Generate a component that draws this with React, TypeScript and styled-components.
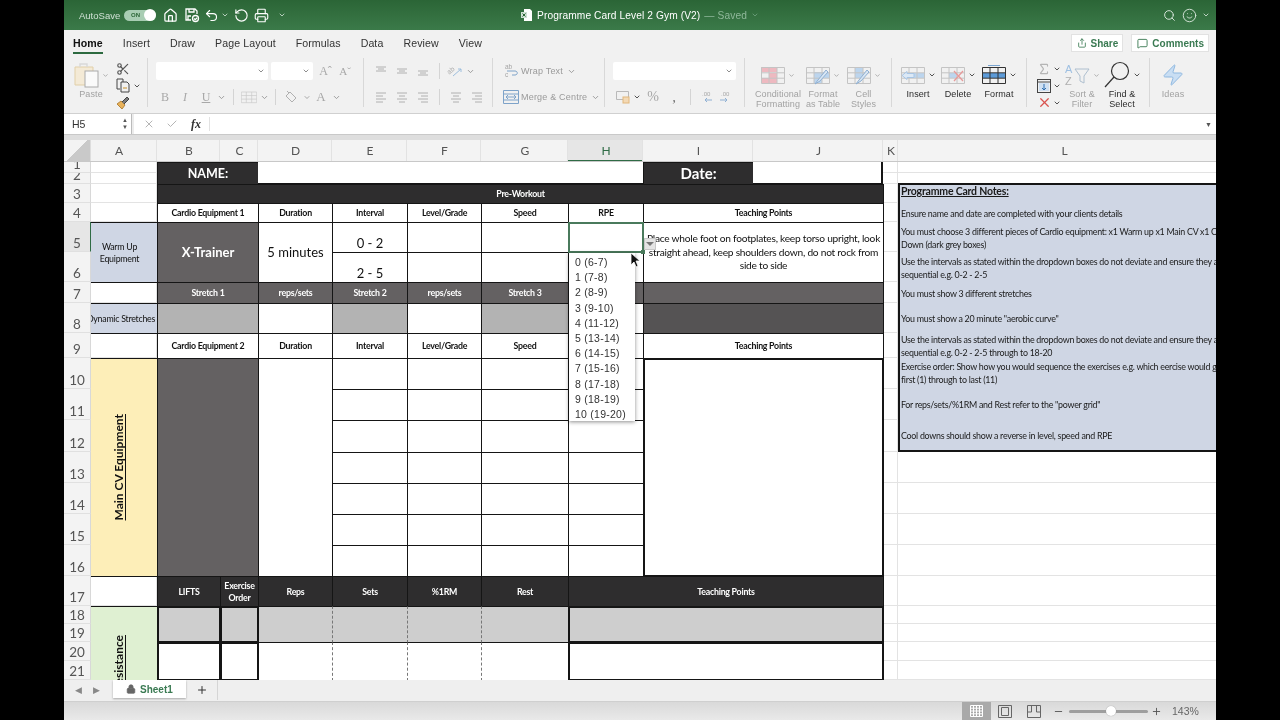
import React from "react";
import styled, { createGlobalStyle } from "styled-components";
import {
  House,
  Undo2,
  RotateCcw,
  Printer,
  Scissors,
  Search,
  Smile,
  ChevronDown,
  MessageSquare,
  Share,
  Lock,
  Plus,
  Minus,
  X,
  Check,
  Zap,
  Sigma,
} from "lucide-react";

const UI_FONT = `"Liberation Sans", Arial, sans-serif`;
const CELL_FONT = `Lato, "Open Sans", sans-serif`;

const COLUMNS = "27px 66px 63px 38px 74px 75px 74px 87px 75px 110px 130px 15px 332px";
const ROW_HEIGHTS = [11, 11, 19, 19, 30, 30, 21, 30, 25, 31, 31, 32, 31, 31, 31, 31, 30, 18, 18, 19, 19];

const GlobalStyle = createGlobalStyle`
  html, body { margin: 0; padding: 0; background: #000; overflow: hidden; }
`;

const Screen = styled.div`
  width: 1280px;
  height: 720px;
  background: #000;
  display: flex;
  justify-content: center;
`;

const Frame = styled.div`
  width: 1152px;
  height: 720px;
  display: flex;
  flex-direction: column;
  overflow: hidden;
  font-family: ${UI_FONT};
  background: #f1f1f1;
  filter: blur(0.35px);
`;

/* title bar */
const TitleBar = styled.header`
  height: 30px;
  flex: none;
  display: grid;
  grid-template-columns: 1fr auto 1fr;
  align-items: center;
  background: linear-gradient(#2b6536, #3b7a49);
  color: #fff;
`;

const Qat = styled.div`
  display: flex;
  align-items: center;
  padding-left: 15px;
`;

const AutoSave = styled.span`
  font-size: 9.5px;
  width: 45px;
  color: #cfe0d4;
`;

const Toggle = styled.span`
  width: 32px;
  height: 11px;
  border-radius: 6px;
  background: #a8cdb3;
  position: relative;
  font-size: 6px;
  line-height: 11px;
  padding-left: 7px;
  box-sizing: border-box;
  color: #2b6536;
  font-weight: bold;
  margin-right: 4px;

  &::after {
    content: "";
    position: absolute;
    right: 0;
    top: -0.5px;
    width: 12px;
    height: 12px;
    background: #fff;
    border-radius: 50%;
  }
`;

const Slot = styled.span<{ $w: number; $h?: number; $c?: string }>`
  width: ${(p) => p.$w}px;
  height: ${(p) => p.$h ?? 18}px;
  flex: none;
  display: flex;
  align-items: center;
  justify-content: center;
  color: ${(p) => p.$c ?? "inherit"};
`;

const DocTitle = styled.div`
  display: flex;
  align-items: center;
  font-size: 10.2px;
  letter-spacing: 0.1px;
  gap: 4px;
`;

const SavedTag = styled.span`
  color: #8fb79a;
`;

const TitleRight = styled.div`
  display: flex;
  align-items: center;
  justify-content: flex-end;
  padding-right: 6px;
  gap: 3px;
  color: #d7e5db;
`;

/* tabs */
const TabRow = styled.nav`
  height: 26px;
  flex: none;
  display: flex;
  align-items: flex-start;
  padding: 4px 7px 0 9px;
  gap: 20px;
  box-sizing: border-box;
  background: #f1f1f1;
`;

const Tab = styled.span<{ $active?: boolean }>`
  font-size: 10.6px;
  line-height: 18px;
  height: 18px;
  letter-spacing: 0.1px;
  color: ${(p) => (p.$active ? "#111" : "#333")};
  font-weight: ${(p) => (p.$active ? "bold" : "normal")};
  border-bottom: ${(p) => (p.$active ? "2px solid #2d6a40" : "none")};
`;

const TabActions = styled.div`
  margin-left: auto;
  display: flex;
  gap: 8px;
`;

const ActionButton = styled.span`
  height: 18px;
  background: #fff;
  border: 1px solid #e2e2e2;
  box-sizing: border-box;
  display: flex;
  align-items: center;
  padding: 0 4px 0 5px;
  gap: 4px;
  font-size: 10px;
  font-weight: bold;
  color: #3a7a52;
`;

/* ribbon */
const Ribbon = styled.section`
  height: 58px;
  flex: none;
  display: flex;
  background: #f1f1f1;
  border-bottom: 1px solid #d0d0d0;
  box-sizing: border-box;
  padding-top: 2px;
`;

const Group = styled.div<{ $w?: number; $pad?: number; $row?: boolean; $lead?: number }>`
  width: ${(p) => (p.$w ? `${p.$w}px` : "auto")};
  flex: ${(p) => (p.$w ? "none" : "1")};
  height: 49px;
  box-sizing: border-box;
  padding: 4px 0 0 ${(p) => p.$pad ?? 0}px;
  border-right: ${(p) => (p.$w ? "1px solid #d8d8d8" : "none")};
  display: flex;
  flex-direction: ${(p) => (p.$row ? "row" : "column")};
  gap: ${(p) => (p.$row ? "0" : "8px")};
`;

const ToolRow = styled.div`
  display: flex;
  align-items: center;
  height: 18px;
`;

const Combo = styled.span<{ $w: number }>`
  width: ${(p) => p.$w}px;
  height: 18px;
  background: #fff;
  border-radius: 2px;
  display: flex;
  align-items: center;
  justify-content: flex-end;
  padding-right: 3px;
  box-sizing: border-box;
  margin-right: 3px;
  color: #666;
`;

const Glyph = styled.span<{ $c?: string; $size?: number; $i?: boolean; $u?: boolean }>`
  font-family: "Liberation Serif", serif;
  font-size: ${(p) => p.$size ?? 11}px;
  font-style: ${(p) => (p.$i ? "italic" : "normal")};
  text-decoration: ${(p) => (p.$u ? "underline" : "none")};
  color: ${(p) => p.$c ?? "#a8a8a8"};
`;

const RowSep = styled.span`
  width: 1px;
  height: 16px;
  background: #d4d4d4;
`;

const InlineLabel = styled.span`
  font-size: 9px;
  color: #9a9a9a;
  letter-spacing: 0.2px;
  white-space: nowrap;
  margin: 0 4px 0 1px;
`;

const BigTool = styled.div<{ $w: number; $dark?: boolean; $lead?: number }>`
  width: ${(p) => p.$w}px;
  flex: none;
  display: flex;
  flex-direction: column;
  align-items: center;
  margin: -2px 0 0 ${(p) => p.$lead ?? 0}px;
  color: ${(p) => (p.$dark ? "#2b2b2b" : "#a2a2a2")};
`;

const BigIcon = styled.div`
  height: 30px;
  flex: none;
  display: flex;
  align-items: center;
  gap: 3px;
  white-space: nowrap;
`;

const BigLabel = styled.span`
  font-size: 9px;
  line-height: 9.5px;
  text-align: center;
  white-space: nowrap;
  letter-spacing: 0.1px;
`;

const ToolStack = styled.div<{ $w: number }>`
  width: ${(p) => p.$w}px;
  flex: none;
  display: flex;
  flex-direction: column;
  align-items: flex-start;
  margin-top: -2px;
`;

const StackRow = styled.div`
  height: 17px;
  display: flex;
  align-items: center;
`;

/* formula bar */
const FormulaBar = styled.div`
  height: 21px;
  flex: none;
  display: flex;
  align-items: center;
  background: #fff;
  border-bottom: 1px solid #c9c9c9;
  box-sizing: border-box;
  color: #b5b5b5;
`;

const NameBox = styled.div`
  width: 68px;
  height: 100%;
  flex: none;
  box-sizing: border-box;
  border-right: 1px solid #bbb;
  display: flex;
  align-items: center;
  justify-content: space-between;
  padding: 0 3px 0 8px;
  font-size: 10.5px;
  color: #333;
`;

const Stepper = styled.span`
  font-size: 6px;
  line-height: 7px;
  color: #555;
  text-align: center;
`;

const FormulaTools = styled.div`
  flex: 1;
  display: flex;
  align-items: center;
  padding-left: 4px;
  height: 100%;
  background: #fff;
  border-left: 2px solid #ececec;
`;

const Fx = styled.span`
  font-family: "Liberation Serif", serif;
  font-style: italic;
  font-weight: bold;
  font-size: 12px;
  color: #333;
`;

const FormulaSep = styled.span`
  width: 1px;
  height: 14px;
  background: #e2e2e2;
  margin-left: 1px;
`;

const FormulaEnd = styled.span`
  margin-left: auto;
  padding-right: 4px;
  font-size: 7px;
  color: #555;
`;

const Strip = styled.div`
  height: 5px;
  flex: none;
  background: #dedede;
`;

/* column headers */
const ColumnRow = styled.div`
  height: 22px;
  flex: none;
  display: grid;
  grid-template-columns: ${COLUMNS};
  background: #f3f3f3;
  border-bottom: 1px solid #c8c8c8;
  box-sizing: border-box;
`;

const Corner = styled.div`
  background: linear-gradient(135deg, #f3f3f3 50%, #c9c9c9 50%);
  border-right: 1px solid #ddd;
`;

const ColumnHead = styled.div<{ $active?: boolean; $first?: boolean }>`
  display: flex;
  align-items: center;
  justify-content: center;
  padding: ${(p) => (p.$first ? "0 9px 0 0" : "0 0 0 2px")};
  font-family: ${CELL_FONT};
  font-size: 12px;
  color: ${(p) => (p.$active ? "#2f6b45" : "#555")};
  background: ${(p) => (p.$active ? "#e6e6e6" : "transparent")};
  border-right: 1px solid #e2e2e2;
  box-shadow: ${(p) => (p.$active ? "inset 0 -1px 0 #2f6b45" : "none")};
`;

/* sheet */
const Sheet = styled.div`
  position: relative;
  height: 518px;
  flex: none;
  display: grid;
  grid-template-columns: ${COLUMNS};
  grid-template-rows: ${ROW_HEIGHTS.map((h) => `${h}px`).join(" ")};
  background: #fff;
  overflow: hidden;
`;

const RowHead = styled.div<{ $r: number; $active?: boolean }>`
  grid-column: 1;
  grid-row: ${(p) => p.$r};
  display: flex;
  align-items: flex-end;
  justify-content: center;
  overflow: hidden;
  font-family: ${CELL_FONT};
  font-size: 13.5px;
  line-height: 16px;
  color: #555;
  background: ${(p) => (p.$active ? "#e6e6e6" : "#f3f3f3")};
  border-bottom: 1px solid #e0e0e0;
  border-right: ${(p) => (p.$active ? "1px solid #2f6b45" : "1px solid #d8d8d8")};
  box-sizing: border-box;
`;

const GridLine = styled.div<{ $r: number; $c: number }>`
  grid-row: ${(p) => p.$r};
  grid-column: ${(p) => p.$c};
  border-right: 1px solid #e3e3e3;
  border-bottom: 1px solid #e3e3e3;
  box-sizing: border-box;
`;

const Cell = styled.div<{
  $c: string;
  $r: string;
  $bg?: string;
  $fg?: string;
  $size?: number;
  $bold?: boolean;
  $noRight?: boolean;
  $heavy?: boolean;
  $low?: boolean;
}>`
  grid-column: ${(p) => p.$c};
  grid-row: ${(p) => p.$r};
  margin: 0 -1px -1px 0;
  box-sizing: border-box;
  display: flex;
  align-items: ${(p) => (p.$low ? "flex-end" : "center")};
  justify-content: center;
  text-align: center;
  overflow: hidden;
  white-space: pre;
  border: ${(p) => (p.$heavy ? 2 : 1)}px solid #151515;
  border-right-style: ${(p) => (p.$noRight ? "none" : "solid")};
  background: ${(p) => p.$bg ?? "#fff"};
  color: ${(p) => p.$fg ?? "#111"};
  font-family: ${CELL_FONT};
  font-size: ${(p) => p.$size ?? 8.8}px;
  letter-spacing: ${(p) => ((p.$size ?? 8.8) > 12 ? "0" : "-0.25px")};
  font-weight: ${(p) => (p.$bold ? 700 : 400)};
  line-height: ${(p) => (p.$low ? "17px" : "1.36")};
`;

const DashedCell = styled(Cell)`
  border-left: 1px dashed #777;
`;

const BlankCell = styled(Cell)<{ $edge?: boolean }>`
  border: none;
  margin: 0;
  background: #fff;
  justify-content: flex-end;
  border-bottom: 1px solid #151515;
  border-right: ${(p) => (p.$edge ? "2px solid #151515" : "none")};
`;

const FrontCell = styled(Cell)`
  padding-right: 9px;
  border-left: none;
`;

const SideLabel = styled(Cell)<{ $start?: number }>`
  justify-content: ${(p) => (p.$start ? "flex-start" : "center")};
  flex-direction: column;
  padding: ${(p) => p.$start ?? 0}px 9px 0 0;
  border-left: none;
`;

const VerticalText = styled.span`
  writing-mode: vertical-rl;
  transform: rotate(180deg);
  white-space: nowrap;
  font-size: 12px;
  letter-spacing: 0;
  font-weight: 700;
  text-decoration: underline;
`;

const ClippedLabel = styled(Cell)`
  justify-content: flex-end;
  white-space: nowrap;
  padding-right: 2px;
  border-left: none;
`;

const SelectedCell = styled(Cell)`
  border: 2px solid #4a7a5c;
  z-index: 3;
`;

const Notes = styled.aside`
  grid-column: 13;
  grid-row: 3 / 13;
  margin-top: -1px;
  background: #cfd6e4;
  border: 2px solid #151515;
  border-right: none;
  box-sizing: border-box;
  padding-left: 1px;
  font-family: ${CELL_FONT};
  color: #1a1a1a;
  white-space: nowrap;
  overflow: hidden;
`;

const NotesTitle = styled.div`
  font-size: 10.5px;
  font-weight: 700;
  letter-spacing: -0.2px;
  text-decoration: underline;
  line-height: 13px;
`;

const NoteLine = styled.div<{ $gap: number }>`
  font-size: 8.9px;
  letter-spacing: -0.27px;
  line-height: 13px;
  margin-top: ${(p) => p.$gap}px;
`;

const Dropdown = styled.ul`
  position: absolute;
  left: 505px;
  top: 91px;
  width: 66px;
  height: 168px;
  margin: 0;
  padding: 2px 0 0;
  box-sizing: border-box;
  list-style: none;
  background: #fff;
  box-shadow: 0 1px 4px rgba(0, 0, 0, 0.45);
  z-index: 5;
`;

const DropdownItem = styled.li`
  height: 15.2px;
  line-height: 15.2px;
  padding-left: 6px;
  font-family: ${UI_FONT};
  font-size: 10.5px;
  letter-spacing: 0.25px;
  color: #333;
  white-space: nowrap;
`;

const ListButton = styled.div`
  position: absolute;
  left: 580px;
  top: 76px;
  width: 12px;
  height: 12px;
  background: #e4e4e4;
  border: 1px solid #c8c8c8;
  box-sizing: border-box;
  display: flex;
  align-items: center;
  justify-content: center;
  z-index: 6;

  &::after {
    content: "";
    border-left: 4px solid transparent;
    border-right: 4px solid transparent;
    border-top: 4px solid #777;
  }
`;

const FillHandle = styled.div`
  position: absolute;
  left: 577px;
  top: 88px;
  width: 4px;
  height: 4px;
  background: #4a7a5c;
  z-index: 6;
`;

const Pointer = styled.svg`
  position: absolute;
  left: 566px;
  top: 90px;
  z-index: 7;
`;

/* bottom bars */
const SheetTabs = styled.div`
  height: 22px;
  flex: none;
  display: flex;
  align-items: flex-start;
  padding-left: 5px;
  background: #efefef;
  border-bottom: 1px solid #cfcfcf;
  box-sizing: border-box;
  color: #888;
  font-size: 9px;
`;

const SheetTab = styled.div`
  width: 73px;
  height: 18px;
  margin-left: 7px;
  background: #fff;
  box-shadow: 0 1px 2px rgba(0, 0, 0, 0.3);
  display: flex;
  align-items: center;
  gap: 4px;
  padding-left: 13px;
  box-sizing: border-box;
  font-size: 10px;
  font-weight: bold;
  color: #3a7a52;
`;

const AddSheet = styled.div`
  width: 31px;
  height: 20px;
  flex: none;
  display: flex;
  align-items: center;
  justify-content: center;
  border-right: 1px solid #d5d5d5;
  color: #333;
`;

const StatusBar = styled.footer`
  flex: 1;
  display: flex;
  align-items: stretch;
  justify-content: flex-end;
  background: linear-gradient(#d9d9d9, #e9e9e9);
  color: #555;
`;

const ViewButton = styled.div<{ $active?: boolean; $w: number }>`
  width: ${(p) => p.$w}px;
  display: flex;
  align-items: center;
  justify-content: center;
  background: ${(p) => (p.$active ? "#a9a9a9" : "transparent")};
  color: ${(p) => (p.$active ? "#fff" : "#666")};
`;

const ZoomTrack = styled.div`
  width: 79px;
  height: 3px;
  align-self: center;
  background: #9e9e9e;
  border-radius: 2px;
  position: relative;
  margin: 0 1px;

  &::after {
    content: "";
    position: absolute;
    left: 37px;
    top: -4px;
    width: 10px;
    height: 10px;
    border-radius: 50%;
    background: #fff;
    box-shadow: 0 0 1px #888;
  }
`;

const ZoomValue = styled.div`
  width: 53px;
  padding-left: 9px;
  box-sizing: border-box;
  font-size: 10.5px;
  align-self: center;
  color: #666;
`;

const Chevron = ({ c = "#999", s = 9 }: { c?: string; s?: number }) => (
  <ChevronDown size={s} color={c} strokeWidth={2.5} />
);

/* drawn icons */
const SaveIcon = () => (
  <svg width="16" height="16" viewBox="0 0 16 16" fill="none" stroke="#fff" strokeWidth="1.3">
    <path d="M7 13H2V2h9l2 2v3" />
    <path d="M5 2v3h5V2M4 13V9h3" />
    <circle cx="11.5" cy="11.5" r="3" />
    <path d="M10 11.5l1.2 1.2 2-2" />
  </svg>
);

const ExcelDoc = () => (
  <svg width="12" height="14" viewBox="0 0 12 14" fill="none">
    <path d="M3 1h6l2 2v10H3z" fill="#fff" />
    <rect x="0" y="4" width="6" height="6" fill="#cfe0d4" />
    <path d="M1.5 5.5l3 3M4.5 5.5l-3 3" stroke="#2b6536" />
  </svg>
);

const PasteIcon = () => (
  <svg width="25" height="26" viewBox="0 0 25 26" fill="none">
    <path d="M1 5h18v18H1z" fill="#f4ead6" stroke="#e1cfa8" />
    <path d="M6 5V2h7v3" stroke="#d9d9d9" strokeWidth="1.4" />
    <rect x="11" y="9" width="13" height="16" fill="#fafafa" stroke="#aaa" />
  </svg>
);

const CopyIcon = () => (
  <svg width="14" height="15" viewBox="0 0 14 15" fill="none" stroke="#444">
    <path d="M1 1h6v3M1 1v10h3" />
    <path d="M5 4h6l2 2v8H5z" />
    <path d="M7 10h4" stroke="#c9912b" />
  </svg>
);

const PainterIcon = () => (
  <svg width="14" height="14" viewBox="0 0 14 14" fill="none">
    <path d="M1 8l5 5 3-4-4-4z" fill="#e9b25a" stroke="#b5863d" />
    <path d="M6 6l5-5 2 2-5 5" fill="#7c7c7c" stroke="#444" />
  </svg>
);

const BucketIcon = () => (
  <svg width="14" height="13" viewBox="0 0 14 13" fill="none" stroke="#b0b0b0">
    <path d="M6 1l6 6-4 4-6-6z" />
    <path d="M5 2L3 0" />
  </svg>
);

const OrientIcon = () => (
  <svg width="16" height="14" viewBox="0 0 16 14" fill="none">
    <text x="1" y="9" fontSize="7" fill="#aaa" fontFamily="Liberation Sans" transform="rotate(-40 4 8)">ab</text>
    <path d="M6 12L14 5M11 5h3v3" stroke="#9dbedd" />
  </svg>
);

type Fill = [number, number, number, number, string];

const TableIcon = ({
  line = "#bbb",
  fills = [],
  small,
  children,
}: {
  line?: string;
  fills?: Fill[];
  small?: boolean;
  children?: React.ReactNode;
}) => (
  <svg width={small ? 16 : 24} height={small ? 14 : 20} viewBox="0 0 24 20" fill="none">
    {fills.map(([x, y, w, h, c], i) => (
      <rect key={i} x={x} y={y} width={w} height={h} fill={c} />
    ))}
    <path d="M.5 2.5h23v16H.5zM.5 7.8h23M.5 13.2h23M8 2.5v16M16 2.5v16" stroke={line} />
    {children}
  </svg>
);

const Brush = () => (
  <path d="M9 19l3-4 8-10 2 2-8 9z" fill="#d9e6f3" stroke="#8fb0d3" />
);

const LinesIcon = ({ rows }: { rows: number[][] }) => (
  <svg width="14" height="14" viewBox="0 0 14 14" stroke="#b0b0b0">
    {rows.map(([y, a, b], i) => (
      <path key={i} d={`M${a} ${y}H${b}`} />
    ))}
  </svg>
);

const WrapIcon = () => (
  <svg width="16" height="16" viewBox="0 0 16 16" fill="none">
    <path d="M4 8H12C15 8 15 12 12 12H9" stroke="#7ea3c9" />
    <text x="2" y="6" fontSize="6.5" fill="#a5a5a5" fontFamily="Liberation Sans">ab</text>
    <text x="2" y="14" fontSize="6.5" fill="#a5a5a5" fontFamily="Liberation Sans">c</text>
  </svg>
);

const MergeIcon = () => (
  <svg width="16" height="14" viewBox="0 0 16 14" fill="none" stroke="#7ea3c9">
    <path d="M.5.5h15v13H.5zM.5 4h15M.5 10h15M3 7h10M5 5L3 7l2 2M11 5l2 2-2 2" />
  </svg>
);

const AccountingIcon = () => (
  <svg width="14" height="14" viewBox="0 0 14 14" fill="none" stroke="#b9b9b9">
    <path d="M.5 1.5h12v8H.5z" />
    <rect x="7" y="7" width="6" height="6" fill="#f3d9b5" stroke="#e2b77c" />
  </svg>
);

const DecimalIcon = ({ flip }: { flip?: boolean }) => (
  <svg width="14" height="12" viewBox="0 0 14 12" fill="none" stroke="#b0b0b0">
    <path d={flip ? "M1 9h7M6 7l2 2-2 2" : "M5 9h7M7 7l-2 2 2 2"} stroke="#8fb0d3" />
    <text x="2" y="5" fontSize="6" stroke="none" fill="#a8a8a8" fontFamily="Liberation Sans">.00</text>
  </svg>
);

const FillDownIcon = () => (
  <svg width="14" height="14" viewBox="0 0 14 14" fill="none">
    <rect x=".5" y=".5" width="13" height="13" stroke="#444" />
    <path d="M.5 3h13" stroke="#444" />
    <rect x="2" y="4" width="10" height="8" fill="#cfe0f2" />
    <path d="M7 5v6M5 9l2 2 2-2" stroke="#2f6fb0" />
  </svg>
);

const SortIcon = () => (
  <svg width="25" height="26" viewBox="0 0 25 26" fill="none">
    <text x="0" y="11" fontSize="11" fill="#9fc0e2" fontFamily="Liberation Sans">A</text>
    <text x="0" y="23" fontSize="11" fill="#b0b0b0" fontFamily="Liberation Sans">Z</text>
    <path d="M10 7h14l-5 7v7l-4-2v-5z" stroke="#aebfcf" />
  </svg>
);

const FindIcon = () => (
  <svg width="26" height="28" viewBox="0 0 26 28" fill="none" stroke="#333" strokeWidth="1.2">
    <circle cx="16" cy="10" r="8.5" />
    <path d="M10 16L1 26" />
  </svg>
);

const PageIcon = () => (
  <svg width="14" height="13" viewBox="0 0 14 13" fill="none" stroke="#666">
    <path d="M.5.5h13v12H.5z" />
    <path d="M3.5 2.5h7v8h-7z" />
  </svg>
);

const BreakIcon = () => (
  <svg width="14" height="13" viewBox="0 0 14 13" fill="none" stroke="#666">
    <path d="M.5.5h13v12H.5zM.5 7h4V.5M9.5.5V7h4" />
  </svg>
);

const NormalIcon = () => (
  <svg width="13" height="12" viewBox="0 0 13 12" stroke="#fff">
    <path d="M.5.5h12v11H.5zM.5 3.2h12M.5 6h12M.5 8.8h12M3.5.5v11M6.5.5v11M9.5.5v11" fill="none" />
  </svg>
);

const columnLetters = ["A", "B", "C", "D", "E", "F", "G", "H", "I", "J", "K", "L"];
const heads = ["Duration", "Interval", "Level/Grade", "Speed", "RPE"];
const headCols = ["5", "6", "7", "8", "9"];
const rpeOptions = [
  "0 (6-7)", "1 (7-8)", "2 (8-9)", "3 (9-10)", "4 (11-12)", "5 (13-14)",
  "6 (14-15)", "7 (15-16)", "8 (17-18)", "9 (18-19)", "10 (19-20)",
];
const DARK = "#2e2d2e";
const MID = "#646162";
const SILVER = "#b3b3b3";
const PALE = "#cecece";

const Titlebar = () => (
  <TitleBar>
    <Qat>
      <AutoSave>AutoSave</AutoSave>
      <Toggle>ON</Toggle>
      <Slot $w={21}><House size={15} strokeWidth={2} /></Slot>
      <Slot $w={21}><SaveIcon /></Slot>
      <Slot $w={18}><Undo2 size={15} strokeWidth={1.8} /></Slot>
      <Slot $w={10}><Chevron c="#cfe0d4" s={8} /></Slot>
      <Slot $w={23}><RotateCcw size={15} strokeWidth={1.8} /></Slot>
      <Slot $w={17}><Printer size={15} strokeWidth={1.8} /></Slot>
      <Slot $w={23}><Chevron c="#cfe0d4" s={8} /></Slot>
    </Qat>
    <DocTitle>
      <ExcelDoc />
      Programme Card Level 2 Gym (V2)
      <SavedTag>— Saved</SavedTag>
      <Chevron c="#6fa07e" s={8} />
    </DocTitle>
    <TitleRight>
      <Search size={13} strokeWidth={1.8} />
      <Slot $w={20}><Smile size={15} strokeWidth={1.5} /></Slot>
      <Chevron c="#d7e5db" s={8} />
    </TitleRight>
  </TitleBar>
);

const Tabs = () => (
  <TabRow>
    <Tab $active>Home</Tab>
    {["Insert", "Draw", "Page Layout", "Formulas", "Data", "Review", "View"].map((t) => (
      <Tab key={t}>{t}</Tab>
    ))}
    <TabActions>
      <ActionButton><Share size={10} />Share</ActionButton>
      <ActionButton><MessageSquare size={11} />Comments</ActionButton>
    </TabActions>
  </TabRow>
);

const alignTop = [[[3, 2, 12], [5, 4, 10], [7, 2, 12]], [[5, 2, 12], [7, 4, 10], [9, 2, 12]], [[7, 2, 12], [9, 4, 10], [11, 2, 12]]];
const alignBottom = [[[3, 2, 12], [6, 2, 9], [9, 2, 12], [12, 2, 9]], [[3, 2, 12], [6, 4, 10], [9, 2, 12], [12, 4, 10]], [[3, 2, 12], [6, 5, 12], [9, 2, 12], [12, 5, 12]]];

const RibbonBar = () => (
  <Ribbon>
    <Group $w={84} $row>
      <BigTool $w={44} $lead={5}>
        <BigIcon><PasteIcon /><Chevron s={7} /></BigIcon>
        <BigLabel>Paste</BigLabel>
      </BigTool>
      <ToolStack $w={30}>
        <StackRow><Slot $w={20} $h={17}><Scissors size={14} color="#555" /></Slot></StackRow>
        <StackRow><Slot $w={20} $h={17}><CopyIcon /></Slot><Chevron c="#333" s={8} /></StackRow>
        <StackRow><Slot $w={20} $h={17}><PainterIcon /></Slot></StackRow>
      </ToolStack>
    </Group>

    <Group $w={216} $pad={8}>
      <ToolRow>
        <Combo $w={112}><Chevron c="#777" s={8} /></Combo>
        <Combo $w={42}><Chevron c="#777" s={8} /></Combo>
        <Slot $w={19}><Glyph $size={12}>Aˆ</Glyph></Slot>
        <Slot $w={20}><Glyph $size={11}>Aˇ</Glyph></Slot>
      </ToolRow>
      <ToolRow>
        <Slot $w={18}><Glyph $size={12}>B</Glyph></Slot>
        <Slot $w={22}><Glyph $size={12} $i>I</Glyph></Slot>
        <Slot $w={20}><Glyph $size={12} $u>U</Glyph></Slot>
        <Slot $w={10}><Chevron /></Slot>
        <Slot $w={14}><RowSep /></Slot>
        <Slot $w={17}><TableIcon line="#c9c9c9" small /></Slot>
        <Slot $w={14}><Chevron /></Slot>
        <Slot $w={8}><RowSep /></Slot>
        <Slot $w={24}><BucketIcon /></Slot>
        <Slot $w={8}><Chevron /></Slot>
        <Slot $w={20}><Glyph $size={13}>A</Glyph></Slot>
        <Slot $w={10}><Chevron /></Slot>
      </ToolRow>
    </Group>

    <Group $w={129} $pad={7}>
      <ToolRow>
        <Slot $w={20}><LinesIcon rows={alignTop[0]} /></Slot>
        <Slot $w={21}><LinesIcon rows={alignTop[1]} /></Slot>
        <Slot $w={21}><LinesIcon rows={alignTop[2]} /></Slot>
        <Slot $w={13}><RowSep /></Slot>
        <Slot $w={18}><OrientIcon /></Slot>
        <Slot $w={12}><Chevron /></Slot>
      </ToolRow>
      <ToolRow>
        <Slot $w={20}><LinesIcon rows={alignBottom[0]} /></Slot>
        <Slot $w={21}><LinesIcon rows={alignBottom[1]} /></Slot>
        <Slot $w={21}><LinesIcon rows={alignBottom[2]} /></Slot>
        <Slot $w={13}><RowSep /></Slot>
        <Slot $w={20}><LinesIcon rows={alignBottom[1]} /></Slot>
        <Slot $w={21}><LinesIcon rows={alignBottom[2]} /></Slot>
      </ToolRow>
    </Group>

    <Group $w={112} $pad={8}>
      <ToolRow>
        <Slot $w={19}><WrapIcon /></Slot>
        <InlineLabel>Wrap Text</InlineLabel>
        <Chevron />
      </ToolRow>
      <ToolRow>
        <Slot $w={19}><MergeIcon /></Slot>
        <InlineLabel>Merge &amp; Centre</InlineLabel>
        <Chevron />
      </ToolRow>
    </Group>

    <Group $w={140} $pad={8}>
      <ToolRow>
        <Combo $w={123}><Chevron c="#777" s={8} /></Combo>
      </ToolRow>
      <ToolRow>
        <Slot $w={20}><AccountingIcon /></Slot>
        <Slot $w={8}><Chevron c="#333" s={8} /></Slot>
        <Slot $w={24}><Glyph $size={14}>%</Glyph></Slot>
        <Slot $w={18}><Glyph $size={15} $c="#777">,</Glyph></Slot>
        <Slot $w={14}><RowSep /></Slot>
        <Slot $w={19}><DecimalIcon /></Slot>
        <Slot $w={20}><DecimalIcon flip /></Slot>
      </ToolRow>
    </Group>

    <Group $w={147} $pad={4} $row>
      <BigTool $w={58}>
        <BigIcon>
          <TableIcon line="#c4c4c4" fills={[[0, 2, 8, 5, "#eeb9c0"], [8, 2, 8, 5, "#eeb9c0"], [8, 8, 8, 5, "#eeb9c0"], [0, 13, 16, 5, "#eeb9c0"]]} />
          <Chevron s={7} />
        </BigIcon>
        <BigLabel>Conditional<br />Formatting</BigLabel>
      </BigTool>
      <BigTool $w={32}>
        <BigIcon>
          <TableIcon line="#c4c4c4" fills={[[8, 7, 16, 6, "#bcd5ee"], [8, 13, 8, 5, "#bcd5ee"]]}><Brush /></TableIcon>
          <Chevron s={7} />
        </BigIcon>
        <BigLabel>Format<br />as Table</BigLabel>
      </BigTool>
      <BigTool $w={49}>
        <BigIcon>
          <TableIcon line="#c4c4c4" fills={[[8, 2, 8, 11, "#bcd5ee"]]}><Brush /></TableIcon>
          <Chevron s={7} />
        </BigIcon>
        <BigLabel>Cell<br />Styles</BigLabel>
      </BigTool>
    </Group>

    <Group $w={135} $pad={6} $row>
      <BigTool $w={40} $dark>
        <BigIcon>
          <TableIcon line="#c4c4c4" fills={[[8, 8, 16, 5, "#bcd5ee"]]}>
            <path d="M1 10.5l5-4v2h7v4H6v2z" fill="#dce9f6" stroke="#a8c5e4" />
          </TableIcon>
          <Chevron c="#333" s={8} />
        </BigIcon>
        <BigLabel>Insert</BigLabel>
      </BigTool>
      <BigTool $w={40} $dark>
        <BigIcon>
          <TableIcon line="#c4c4c4" fills={[[8, 8, 8, 5, "#bcd5ee"]]}>
            <path d="M13 6l9 10M22 6l-9 10" stroke="#e79a9a" strokeWidth="1.3" />
          </TableIcon>
          <Chevron c="#333" s={8} />
        </BigIcon>
        <BigLabel>Delete</BigLabel>
      </BigTool>
      <BigTool $w={42} $dark>
        <BigIcon>
          <TableIcon line="#333" fills={[[0, 8, 24, 5, "#5d9bd8"]]}>
            <path d="M6 .5h12" stroke="#7aa6d2" />
          </TableIcon>
          <Chevron c="#333" s={8} />
        </BigIcon>
        <BigLabel>Format</BigLabel>
      </BigTool>
    </Group>

    <Group $w={123} $pad={8} $row>
      <ToolStack $w={27}>
        <StackRow><Slot $w={18} $h={17}><Sigma size={14} color="#b5b5b5" /></Slot><Chevron c="#333" s={8} /></StackRow>
        <StackRow><Slot $w={18} $h={17}><FillDownIcon /></Slot><Chevron c="#333" s={8} /></StackRow>
        <StackRow><Slot $w={18} $h={17}><X size={15} color="#d9534f" /></Slot><Chevron c="#333" s={8} /></StackRow>
      </ToolStack>
      <BigTool $w={40}>
        <BigIcon><SortIcon /><Chevron s={7} /></BigIcon>
        <BigLabel>Sort &amp;<br />Filter</BigLabel>
      </BigTool>
      <BigTool $w={40} $dark>
        <BigIcon><FindIcon /><Chevron c="#333" s={8} /></BigIcon>
        <BigLabel>Find &amp;<br />Select</BigLabel>
      </BigTool>
    </Group>

    <Group $pad={1} $row>
      <BigTool $w={44}>
        <BigIcon><Zap size={24} color="#8fb8e0" fill="#c9def3" strokeWidth={1} /></BigIcon>
        <BigLabel>Ideas</BigLabel>
      </BigTool>
    </Group>
  </Ribbon>
);

const Formula = () => (
  <FormulaBar>
    <NameBox>
      H5
      <Stepper>▲<br />▼</Stepper>
    </NameBox>
    <FormulaTools>
      <Slot $w={22}><X size={12} /></Slot>
      <Slot $w={24}><Check size={12} /></Slot>
      <Slot $w={24}><Fx>fx</Fx></Slot>
      <FormulaSep />
      <FormulaEnd>▼</FormulaEnd>
    </FormulaTools>
  </FormulaBar>
);

const Grid = () => {
  const usedA = [3, 4, 7, 9, 17, 1, 2];
  return (
    <Sheet>
      {ROW_HEIGHTS.map((_, i) => (
        <RowHead key={i} $r={i + 1} $active={i === 4}>{i + 1}</RowHead>
      ))}
      {usedA.map((r) => <GridLine key={`a${r}`} $r={r} $c={2} />)}
      {ROW_HEIGHTS.map((_, i) => <GridLine key={`k${i}`} $r={i + 1} $c={12} />)}
      {[1, 2, 13, 14, 15, 16, 17, 18, 19, 20, 21].map((r) => <GridLine key={`l${r}`} $r={r} $c={13} />)}

      <Cell $c="3 / 5" $r="1 / 3" $bg={DARK} $fg="#fff" $size={12.5} $bold>NAME:</Cell>
      <BlankCell $c="5 / 10" $r="1 / 3" />
      <Cell $c="10 / 11" $r="1 / 3" $bg={DARK} $fg="#fff" $size={15} $bold>Date:</Cell>
      <BlankCell $c="11 / 12" $r="1 / 3" $edge />
      <Cell $c="3 / 12" $r="3" $bg={DARK} $fg="#fff" $bold>Pre-Workout</Cell>

      <Cell $c="3 / 5" $r="4" $bold>Cardio Equipment 1</Cell>
      {heads.map((h, i) => <Cell key={h} $c={headCols[i]} $r="4" $bold>{h}</Cell>)}
      <Cell $c="10 / 12" $r="4" $bold>Teaching Points</Cell>

      <FrontCell $c="2" $r="5 / 7" $bg="#cfd6e4">{"Warm Up\nEquipment"}</FrontCell>
      <Cell $c="3 / 5" $r="5 / 7" $bg={MID} $fg="#fff" $size={13} $bold>X-Trainer</Cell>
      <Cell $c="5" $r="5 / 7" $size={13}>5 minutes</Cell>
      <Cell $c="6" $r="5" $size={13} $low>0 - 2</Cell>
      <Cell $c="6" $r="6" $size={13} $low>2 - 5</Cell>
      <Cell $c="7" $r="5" />
      <Cell $c="7" $r="6" />
      <Cell $c="8" $r="5" />
      <Cell $c="8" $r="6" />
      <Cell $c="9" $r="6" />
      <Cell $c="10 / 12" $r="5 / 7" $size={10.2}>{"Place whole foot on footplates, keep torso upright, look\nstraight ahead, keep shoulders down, do not rock from\nside to side"}</Cell>
      <SelectedCell $c="9" $r="5" />

      <Cell $c="3 / 5" $r="7" $bg={MID} $fg="#fff" $bold>Stretch 1</Cell>
      <Cell $c="5" $r="7" $bg={MID} $fg="#fff" $bold>reps/sets</Cell>
      <Cell $c="6" $r="7" $bg={MID} $fg="#fff" $bold>Stretch 2</Cell>
      <Cell $c="7" $r="7" $bg={MID} $fg="#fff" $bold>reps/sets</Cell>
      <Cell $c="8" $r="7" $bg={MID} $fg="#fff" $bold>Stretch 3</Cell>
      <Cell $c="9" $r="7" $bg={MID} $fg="#fff" $bold>reps/sets</Cell>
      <Cell $c="10 / 12" $r="7" $bg={MID} />

      <ClippedLabel $c="2" $r="8" $bg="#cfd6e4">Dynamic Stretches</ClippedLabel>
      <Cell $c="3 / 5" $r="8" $bg={SILVER} />
      <Cell $c="5" $r="8" />
      <Cell $c="6" $r="8" $bg={SILVER} />
      <Cell $c="7" $r="8" />
      <Cell $c="8" $r="8" $bg={SILVER} />
      <Cell $c="9" $r="8" />
      <Cell $c="10 / 12" $r="8" $bg="#555354" />

      <Cell $c="3 / 5" $r="9" $bold>Cardio Equipment 2</Cell>
      {heads.map((h, i) => <Cell key={h} $c={headCols[i]} $r="9" $bold>{h}</Cell>)}
      <Cell $c="10 / 12" $r="9" $bold>Teaching Points</Cell>

      <SideLabel $c="2" $r="10 / 17" $bg="#fdeeb8"><VerticalText>Main CV Equipment</VerticalText></SideLabel>
      <Cell $c="3 / 5" $r="10 / 17" $bg={MID} />
      <Cell $c="5" $r="10 / 17" />
      {[10, 11, 12, 13, 14, 15, 16].map((r) =>
        ["6", "7", "8", "9"].map((c) => <Cell key={`${c}-${r}`} $c={c} $r={String(r)} />)
      )}
      <Cell $c="10 / 12" $r="10 / 17" $heavy />

      <Cell $c="3" $r="17" $bg={DARK} $fg="#fff" $bold>LIFTS</Cell>
      <Cell $c="4" $r="17" $bg={DARK} $fg="#fff" $bold>{"Exercise\nOrder"}</Cell>
      <Cell $c="5" $r="17" $bg={DARK} $fg="#fff" $bold>Reps</Cell>
      <Cell $c="6" $r="17" $bg={DARK} $fg="#fff" $bold>Sets</Cell>
      <Cell $c="7" $r="17" $bg={DARK} $fg="#fff" $bold>%1RM</Cell>
      <Cell $c="8" $r="17" $bg={DARK} $fg="#fff" $bold>Rest</Cell>
      <Cell $c="9 / 12" $r="17" $bg={DARK} $fg="#fff" $bold>Teaching Points</Cell>

      <SideLabel $c="2" $r="18 / 22" $bg="#dff0d2" $start={28}><VerticalText>Resistance</VerticalText></SideLabel>
      {["18 / 20", "20 / 22"].map((r, i) => (
        <React.Fragment key={r}>
          <Cell $c="3" $r={r} $bg={i ? "#fff" : PALE} $heavy />
          <Cell $c="4" $r={r} $bg={i ? "#fff" : PALE} $heavy />
          <Cell $c="5" $r={r} $bg={i ? "#fff" : PALE} $noRight />
          <DashedCell $c="6" $r={r} $bg={i ? "#fff" : PALE} $noRight />
          <DashedCell $c="7" $r={r} $bg={i ? "#fff" : PALE} $noRight />
          <DashedCell $c="8" $r={r} $bg={i ? "#fff" : PALE} $noRight />
          <Cell $c="9 / 12" $r={r} $bg={i ? "#fff" : PALE} $heavy />
        </React.Fragment>
      ))}

      <Notes>
        <NotesTitle>Programme Card Notes:</NotesTitle>
        <NoteLine $gap={9}>Ensure name and date are completed with your clients details</NoteLine>
        <NoteLine $gap={5}>You must choose 3 different pieces of Cardio equipment: x1 Warm up x1 Main CV x1 Cool</NoteLine>
        <NoteLine $gap={0}>Down (dark grey boxes)</NoteLine>
        <NoteLine $gap={4}>Use the intervals as stated within the dropdown boxes do not deviate and ensure they are</NoteLine>
        <NoteLine $gap={0}>sequential e.g. 0-2 - 2-5</NoteLine>
        <NoteLine $gap={6}>You must show 3 different stretches</NoteLine>
        <NoteLine $gap={12}>You must show a 20 minute "aerobic curve"</NoteLine>
        <NoteLine $gap={8}>Use the intervals as stated within the dropdown boxes do not deviate and ensure they are</NoteLine>
        <NoteLine $gap={0}>sequential e.g. 0-2 - 2-5 through to 18-20</NoteLine>
        <NoteLine $gap={1}>Exercise order: Show how you would sequence the exercises e.g. which eercise would go</NoteLine>
        <NoteLine $gap={0}>first (1) through to last (11)</NoteLine>
        <NoteLine $gap={12}>For reps/sets/%1RM and Rest refer to the "power grid"</NoteLine>
        <NoteLine $gap={18}>Cool downs should show a reverse in level, speed and RPE</NoteLine>
      </Notes>

      <Dropdown>
        {rpeOptions.map((o) => <DropdownItem key={o}>{o}</DropdownItem>)}
      </Dropdown>
      <ListButton />
      <FillHandle />
      <Pointer width="10" height="16" viewBox="0 0 10 16">
        <path d="M1 1v12l3-3 2 5 2-1-2-5h4z" fill="#111" stroke="#fff" strokeWidth="0.8" />
      </Pointer>
    </Sheet>
  );
};

export default function App() {
  return (
    <Screen>
      <GlobalStyle />
      <Frame>
        <Titlebar />
        <Tabs />
        <RibbonBar />
        <Formula />
        <Strip />
        <ColumnRow>
          <Corner />
          {columnLetters.map((l) => <ColumnHead key={l} $active={l === "H"} $first={l === "A"}>{l}</ColumnHead>)}
        </ColumnRow>
        <Grid />
        <SheetTabs>
          <Slot $w={18} $h={20}>◀</Slot>
          <Slot $w={19} $h={20}>▶</Slot>
          <SheetTab><Lock size={10} fill="#666" color="#666" />Sheet1</SheetTab>
          <AddSheet><Plus size={12} /></AddSheet>
        </SheetTabs>
        <StatusBar>
          <ViewButton $active $w={29}><NormalIcon /></ViewButton>
          <ViewButton $w={28}><PageIcon /></ViewButton>
          <ViewButton $w={29}><BreakIcon /></ViewButton>
          <Slot $w={20} $h={18}><Minus size={11} /></Slot>
          <ZoomTrack />
          <Slot $w={14} $h={18}><Plus size={11} /></Slot>
          <ZoomValue>143%</ZoomValue>
        </StatusBar>
      </Frame>
    </Screen>
  );
}
